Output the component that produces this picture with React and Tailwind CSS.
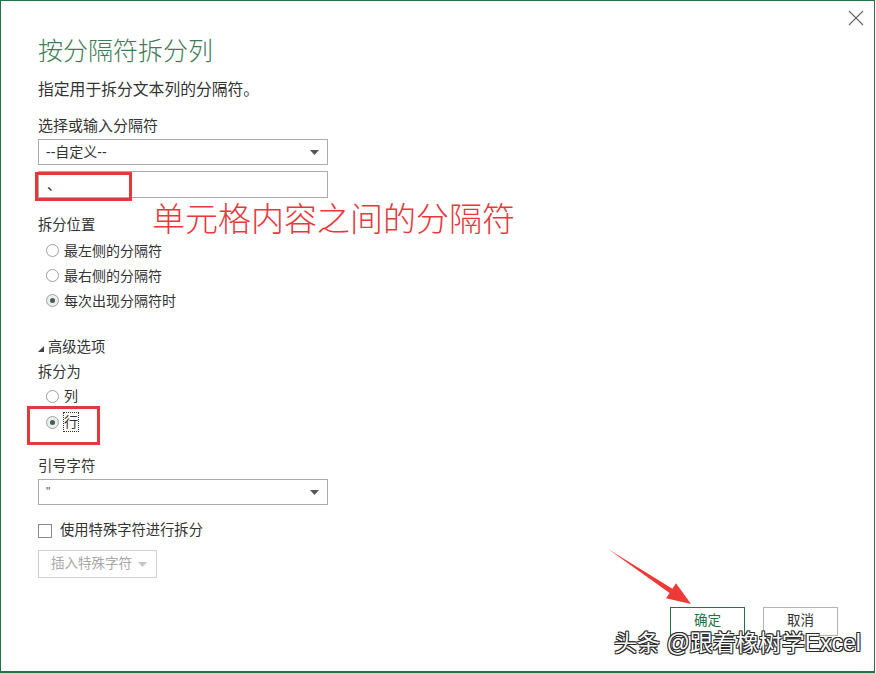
import React from 'react';

const font = "font-['Liberation_Sans','Noto_Sans_CJK_SC',sans-serif]";

function Radio({ checked, label, focus }) {
    return (
        <div className="flex items-center h-full pl-[8px]">
            <span className={`w-[13px] h-[13px] rounded-full border border-[#a0a0a0] flex items-center justify-center ${checked ? 'bg-[#e6f0ea]' : 'bg-white'}`}>
                {checked && <span className="w-[5px] h-[5px] rounded-full bg-[#555]" />}
            </span>
            <span className={`ml-[5px] text-[14px] leading-[18px] text-[#333] ${focus ? 'outline outline-1 outline-dotted outline-[#333] outline-offset-0' : ''}`}>{label}</span>
        </div>
    );
}

function Caret({ light }) {
    return (
        <svg width="9" height="5" viewBox="0 0 9 5">
            <polygon points="0,0 9,0 4.5,5" fill={light ? '#c4c4c4' : '#555'} />
        </svg>
    );
}

function Select({ value, small }) {
    return (
        <div className="w-[290px] h-[26px] border border-[#ababab] bg-white flex items-center justify-between pl-[7px] pr-[8px]">
            <span className={small ? 'text-[12px] text-[#555]' : 'text-[14px] text-[#333]'}>{value}</span>
            <Caret />
        </div>
    );
}

export default function App() {
    return (
        <div className={`relative w-[875px] h-[673px] bg-white border-t border-l border-r border-b-2 border-[#217346] ${font}`}>
            <div className="flex flex-col pl-[37px]">
                <div className="mt-[35px] h-[30px] leading-[30px] text-[25px] font-light text-[#417a58]">按分隔符拆分列</div>
                <div className="mt-[14px] h-[20px] leading-[20px] text-[15.8px] text-[#333]">指定用于拆分文本列的分隔符。</div>
                <div className="mt-[16px] h-[20px] leading-[20px] text-[15px] text-[#333]">选择或输入分隔符</div>
                <div className="mt-[3px]"><Select value="--自定义--" /></div>
                <div className="mt-[6px] w-[290px] h-[27px] border border-[#ababab] bg-white pl-[8px] flex items-end pb-[1px] text-[14px] text-[#333]">、</div>
                <div className="mt-[17px] h-[20px] leading-[20px] text-[14.3px] text-[#333]">拆分位置</div>
                <div className="mt-[3px] flex flex-col">
                    <div className="h-[25px]"><Radio label="最左侧的分隔符" /></div>
                    <div className="h-[25px]"><Radio label="最右侧的分隔符" /></div>
                    <div className="h-[25px]"><Radio label="每次出现分隔符时" checked /></div>
                </div>
                <div className="mt-[25px] h-[20px] flex items-center text-[14.3px] text-[#333]">
                    <svg width="6" height="6" viewBox="0 0 6 6" className="mr-[4px] mt-[2px]">
                        <polygon points="6,0 6,6 0,6" fill="#444" />
                    </svg>
                    高级选项
                </div>
                <div className="mt-[4px] h-[20px] leading-[20px] text-[14.3px] text-[#333]">拆分为</div>
                <div className="mt-[1px] flex flex-col">
                    <div className="h-[26px]"><Radio label="列" /></div>
                    <div className="h-[26px]"><Radio label="行" checked focus /></div>
                </div>
                <div className="mt-[21px] h-[20px] leading-[20px] text-[14.3px] text-[#333]">引号字符</div>
                <div className="mt-[3px]"><Select value={'"'} small /></div>
                <div className="mt-[16px] h-[20px] flex items-center">
                    <span className="w-[14px] h-[14px] border border-[#8a8a8a] bg-white" />
                    <span className="ml-[8px] text-[14.3px] text-[#333]">使用特殊字符进行拆分</span>
                </div>
                <div className="mt-[9px] w-[119px] h-[28px] border border-[#d0d0d0] bg-white flex items-center pl-[12px] gap-[6px]">
                    <span className="text-[13.5px] text-[#a8a8a8]">插入特殊字符</span>
                    <Caret light />
                </div>
                <div className="mt-[29px] flex justify-end gap-[18px] pr-[36px]">
                    <button className="w-[75px] h-[29px] border border-[#217346] bg-white text-[13.5px] text-[#217346]">确定</button>
                    <button className="w-[75px] h-[29px] border border-[#b4b4b4] bg-white text-[13.5px] text-[#333]">取消</button>
                </div>
            </div>

            {/* close */}
            <svg className="absolute left-[847px] top-[9px]" width="16" height="16" viewBox="0 0 16 16">
                <path d="M1 1 L15 15 M15 1 L1 15" stroke="#666" strokeWidth="1.1" />
            </svg>

            {/* annotations */}
            <div className="absolute left-[34px] top-[171px] w-[97px] h-[29px] border-[3px] border-[#e2393c]" />
            <div className="absolute left-[26px] top-[405px] w-[73px] h-[39px] border-[3px] border-[#e2393c]" />
            <div className="absolute left-[151px] top-[199px] leading-[40px] text-[33px] font-light text-[#e5393c] whitespace-nowrap">单元格内容之间的分隔符</div>
            <svg className="absolute left-0 top-0 pointer-events-none" width="875" height="673">
                <polygon points="607,548 671.4,587.7 675,582.3 690,603 665,597.3 668.6,591.9" fill="#ee3a36" />
            </svg>
            <div className="absolute left-[613px] top-[628px] leading-[28px] text-[23px] text-white whitespace-nowrap [text-shadow:1px_1px_0_#2a2a2a,-1px_-1px_0_#2a2a2a,1px_-1px_0_#2a2a2a,-1px_1px_0_#2a2a2a,0_1px_0_#2a2a2a,0_-1px_0_#2a2a2a]">
                头条 @跟着橡树学Excel
            </div>
        </div>
    );
}
